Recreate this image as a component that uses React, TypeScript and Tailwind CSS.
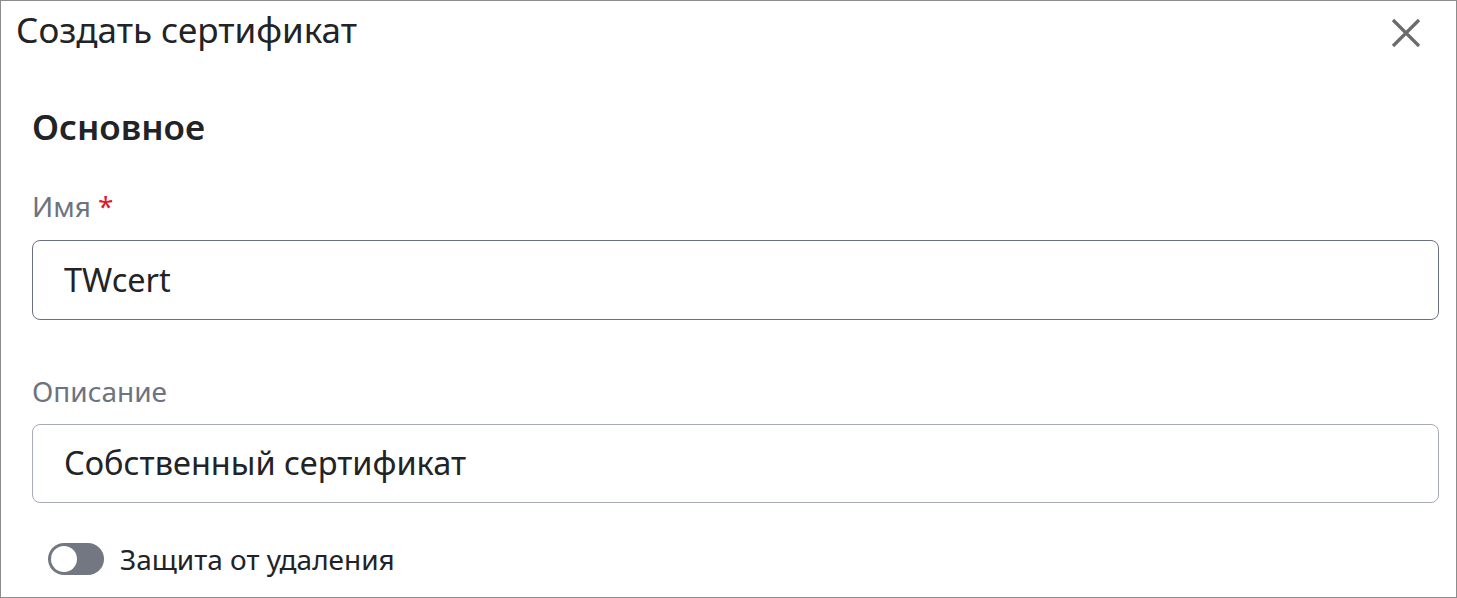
import React from "react";

export default function App() {
  return (
    <div
      className="w-[1457px] h-[598px] border border-[#8c8c8c] bg-white text-[#222326] overflow-hidden"
      style={{ fontFamily: '"Noto Sans", "Open Sans", sans-serif' }}
    >
      <div className="flex justify-between items-start pt-[11px] pl-[15px] pr-[35px]">
        <div className="text-[35px] leading-none">Создать сертификат</div>
        <button className="mt-[6px] w-[30px] h-[30px] flex items-center justify-center text-[#6b6b6b]">
          <svg width="30" height="30" viewBox="0 0 30 30" fill="none" stroke="currentColor" strokeWidth="3.2" strokeLinecap="butt">
            <path d="M2 2 L28 28 M28 2 L2 28" />
          </svg>
        </button>
      </div>
      <div className="pl-[31px] pr-[17px] flex flex-col">
        <div className="mt-[61px] text-[35px] leading-none font-semibold">Основное</div>
        <div className="mt-[48px] text-[28px] leading-none text-[#6e7380]">
          Имя <span className="text-[#e0182d]">*</span>
        </div>
        <div className="mt-[20px] h-[80px] border border-[#6b7080] rounded-[8px] flex items-center px-[31px] text-[32.5px]">
          TWcert
        </div>
        <div className="mt-[57px] text-[28px] leading-none text-[#6e7380]">Описание</div>
        <div className="mt-[19px] h-[79px] border border-[#a6abb6] rounded-[8px] flex items-center px-[31px] text-[32.5px]">
          Собственный сертификат
        </div>
        <div className="mt-[40px] ml-[16px] flex items-center gap-[16px]">
          <div className="w-[56px] h-[32px] rounded-full bg-[#737781] flex items-center px-[3px]">
            <div className="w-[26px] h-[26px] rounded-full bg-white" />
          </div>
          <div className="text-[28px] leading-none">Защита от удаления</div>
        </div>
      </div>
    </div>
  );
}
